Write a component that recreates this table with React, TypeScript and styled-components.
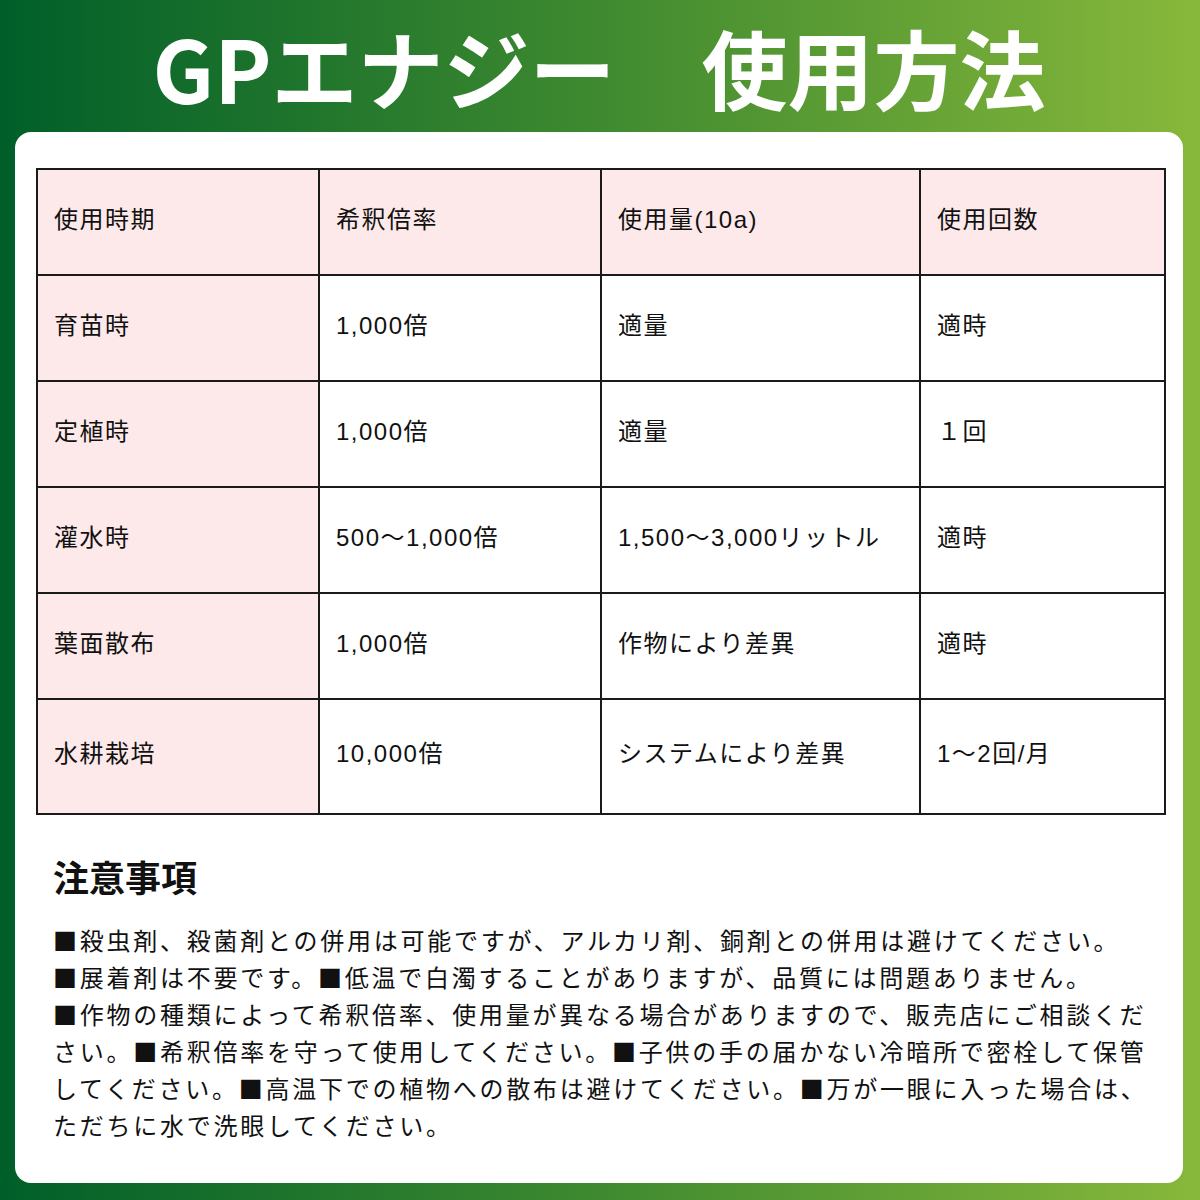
import styled, { createGlobalStyle } from "styled-components";

const GlobalStyle = createGlobalStyle`
  html, body {
    margin: 0;
    padding: 0;
  }
  body {
    font-family: "Liberation Sans", "Noto Sans CJK JP", sans-serif;
  }
`;

const Page = styled.div`
  width: 1200px;
  height: 1200px;
  box-sizing: border-box;
  background: linear-gradient(90deg, #005f29 0%, #3f8a30 50%, #88b83b 100%);
  padding: 0 17px 17px 15px;
  display: flex;
  flex-direction: column;
`;

const Title = styled.h1`
  margin: 0;
  height: 132px;
  display: flex;
  align-items: center;
  justify-content: center;
  color: #fff;
  font-family: "Noto Sans CJK JP", sans-serif;
  font-weight: 700;
  font-size: 86px;
  white-space: pre;
`;

const Card = styled.div`
  flex: 1;
  background: #fff;
  border-radius: 16px;
  padding: 36px 19px 0 21px;
`;

const Table = styled.table`
  width: 1128px;
  border-collapse: collapse;
  table-layout: fixed;
  border: 2px solid #1a1a1a;
`;

const Cell = styled.td<{ $pink?: boolean; $tall?: boolean }>`
  height: ${(p) => (p.$tall ? 103 : 94)}px;
  border: 2px solid #1a1a1a;
  background: ${(p) => (p.$pink ? "#fde9ea" : "#fff")};
  padding: 0 0 10px 16px;
  font-size: 24px;
  letter-spacing: 1.5px;
  color: #111;
  vertical-align: middle;
`;

const Notes = styled.section`
  padding: 36px 0 0 17px;
  width: 1105px;
`;

const NotesTitle = styled.h2`
  margin: 0 0 20px;
  font-family: "Noto Sans CJK JP", sans-serif;
  font-weight: 700;
  font-size: 36px;
  line-height: 50px;
  color: #111;
`;

const Note = styled.p`
  margin: 0;
  font-family: "Noto Sans CJK JP", sans-serif;
  font-size: 24px;
  line-height: 37px;
  letter-spacing: 2.75px;
  color: #111;
`;

const widths = [282, 282, 319, 245];

const rows: string[][] = [
  ["使用時期", "希釈倍率", "使用量(10a)", "使用回数"],
  ["育苗時", "1,000倍", "適量", "適時"],
  ["定植時", "1,000倍", "適量", "１回"],
  ["灌水時", "500～1,000倍", "1,500～3,000リットル", "適時"],
  ["葉面散布", "1,000倍", "作物により差異", "適時"],
  ["水耕栽培", "10,000倍", "システムにより差異", "1～2回/月"],
];

const notes = [
  "■殺虫剤、殺菌剤との併用は可能ですが、アルカリ剤、銅剤との併用は避けてください。",
  "■展着剤は不要です。■低温で白濁することがありますが、品質には問題ありません。",
  "■作物の種類によって希釈倍率、使用量が異なる場合がありますので、販売店にご相談ください。■希釈倍率を守って使用してください。■子供の手の届かない冷暗所で密栓して保管してください。■高温下での植物への散布は避けてください。■万が一眼に入った場合は、ただちに水で洗眼してください。",
];

export default function App() {
  return (
    <>
      <GlobalStyle />
      <Page>
        <Title>{"GPエナジー　使用方法"}</Title>
        <Card>
          <Table>
            <colgroup>
              {widths.map((w, i) => (
                <col key={i} style={{ width: w }} />
              ))}
            </colgroup>
            <tbody>
              {rows.map((row, r) => (
                <tr key={r}>
                  {row.map((text, c) => (
                    <Cell
                      key={c}
                      $pink={r === 0 || c === 0}
                      $tall={r === rows.length - 1}
                    >
                      {text}
                    </Cell>
                  ))}
                </tr>
              ))}
            </tbody>
          </Table>
          <Notes>
            <NotesTitle>注意事項</NotesTitle>
            {notes.map((n) => (
              <Note key={n}>{n}</Note>
            ))}
          </Notes>
        </Card>
      </Page>
    </>
  );
}
